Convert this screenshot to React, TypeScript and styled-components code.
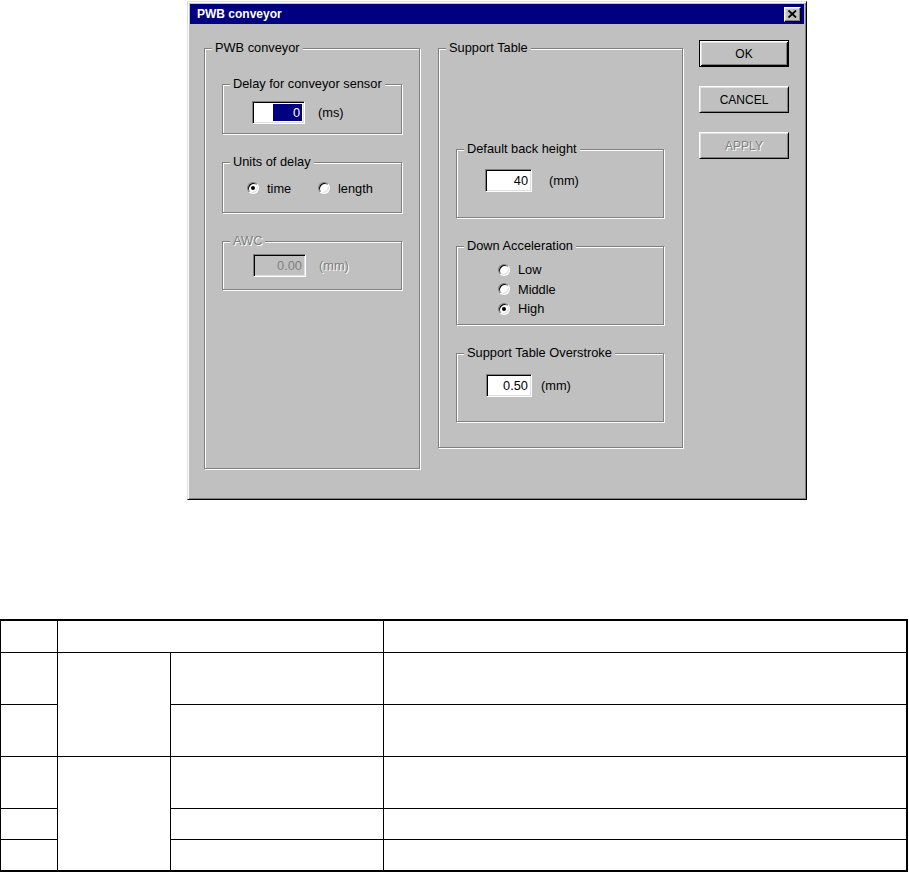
import styled, { createGlobalStyle } from 'styled-components';

const GlobalStyle = createGlobalStyle`
  body {
    margin: 0;
    background: #fff;
    font-family: 'Liberation Sans', Arial, sans-serif;
    color: #000;
  }
`;

const Page = styled.div`
  display: flex;
  flex-direction: column;
  align-items: flex-start;
`;

const Window = styled.div`
  box-sizing: border-box;
  width: 620px;
  height: 499px;
  margin: 1px 0 0 187px;
  padding: 2px;
  background: #c0c0c0;
  border: 1px solid;
  border-color: #dfdfdf #000 #000 #dfdfdf;
  box-shadow: inset 1px 1px #fff, inset -1px -1px #808080;
  display: flex;
  flex-direction: column;
`;

const TitleBar = styled.div`
  height: 20px;
  background: #000080;
  display: flex;
  align-items: center;
  justify-content: space-between;
  padding: 0 3px 0 7px;
`;

const Title = styled.span`
  color: #fff;
  font-weight: bold;
  font-size: 12px;
`;

const CloseButton = styled.div`
  box-sizing: border-box;
  width: 17px;
  height: 15px;
  background: #c0c0c0;
  border: 1px solid;
  border-color: #fff #000 #000 #fff;
  box-shadow: inset -1px -1px #808080, inset 1px 1px #dfdfdf;
  display: flex;
  align-items: center;
  justify-content: center;
`;

const Body = styled.div`
  display: flex;
  align-items: flex-start;
  padding: 16px 0 0 14px;
`;

const Group = styled.fieldset<{ $w?: number; $h: number }>`
  box-sizing: border-box;
  width: ${p => (p.$w ? `${p.$w}px` : 'auto')};
  height: ${p => p.$h}px;
  margin: 0;
  padding: 0;
  min-width: 0;
  border: 1px solid #808080;
  box-shadow: inset 1px 1px #fff, 1px 1px #fff;
`;

const Legend = styled.legend<{ $disabled?: boolean }>`
  margin-left: 7px;
  padding: 0 3px;
  font-size: 12.8px;
  line-height: 14px;
  background: #c0c0c0;
  color: ${p => (p.$disabled ? '#808080' : '#000')};
  text-shadow: ${p => (p.$disabled ? '1px 1px #fff' : 'none')};
`;

const GroupContent = styled.div<{ $pad: string; $gap?: number }>`
  display: flex;
  flex-direction: column;
  gap: ${p => p.$gap ?? 0}px;
  padding: ${p => p.$pad};
`;

const OuterLeft = styled.div`
  margin-top: 1px;
`;

const OuterRight = styled.div`
  margin: 1px 0 0 18px;
`;

const FieldRow = styled.div<{ $gap: number }>`
  display: flex;
  align-items: center;
  gap: ${p => p.$gap}px;
`;

const TextBox = styled.div<{ $w: number; $disabled?: boolean }>`
  box-sizing: border-box;
  width: ${p => p.$w}px;
  height: 23px;
  border: 1px solid;
  border-color: #808080 #fff #fff #808080;
  box-shadow: inset 1px 1px #000, inset -1px -1px #dfdfdf;
  background: ${p => (p.$disabled ? '#c0c0c0' : '#fff')};
  color: ${p => (p.$disabled ? '#808080' : '#000')};
  display: flex;
  align-items: center;
  justify-content: flex-end;
  padding: 2px 3px 2px 2px;
  font-size: 12.8px;
`;

const Selection = styled.span`
  align-self: stretch;
  width: 29px;
  margin-right: -1px;
  background: #000080;
  color: #fff;
  display: flex;
  align-items: center;
  justify-content: flex-end;
  padding-right: 2px;
  box-sizing: border-box;
`;

const Unit = styled.span<{ $disabled?: boolean }>`
  font-size: 12.8px;
  color: ${p => (p.$disabled ? '#808080' : '#000')};
  text-shadow: ${p => (p.$disabled ? '1px 1px #fff' : 'none')};
`;

const RadioRow = styled.div`
  display: flex;
  align-items: center;
  height: 16px;
`;

const RadioOption = styled.div<{ $w?: number }>`
  display: flex;
  align-items: center;
  gap: 8px;
  height: 19.5px;
  width: ${p => (p.$w ? `${p.$w}px` : 'auto')};
  font-size: 12.8px;
`;

const RadioCircle = styled.span<{ $checked?: boolean }>`
  box-sizing: border-box;
  flex-shrink: 0;
  width: 12px;
  height: 12px;
  border-radius: 50%;
  border: 1px solid;
  border-color: #808080 #fff #fff #808080;
  box-shadow: inset 1px 1px #000, inset -1px -1px #dfdfdf;
  background: #fff;
  display: flex;
  align-items: center;
  justify-content: center;

  &::after {
    content: '';
    width: 4px;
    height: 4px;
    border-radius: 50%;
    background: ${p => (p.$checked ? '#000' : 'transparent')};
  }
`;

const ButtonColumn = styled.div`
  display: flex;
  flex-direction: column;
  gap: 19px;
  margin-left: 16px;
`;

const Button = styled.div<{ $default?: boolean; $disabled?: boolean }>`
  box-sizing: border-box;
  width: 90px;
  height: 27px;
  display: flex;
  align-items: center;
  justify-content: center;
  font-size: 12px;
  background: #c0c0c0;
  color: ${p => (p.$disabled ? '#808080' : '#000')};
  text-shadow: ${p => (p.$disabled ? '1px 1px #fff' : 'none')};
  border: 1px solid;
  border-color: ${p => (p.$default ? '#000' : '#fff #000 #000 #fff')};
  box-shadow: ${p =>
    p.$default
      ? 'inset 1px 1px #fff, inset -1px -1px #000, inset 2px 2px #dfdfdf, inset -2px -2px #808080'
      : 'inset 1px 1px #dfdfdf, inset -1px -1px #808080'};
`;

const Table = styled.table`
  margin-top: 119px;
  width: 908px;
  table-layout: fixed;
  border-collapse: separate;
  border-spacing: 0;
  border-style: solid;
  border-color: #000;
  border-width: 2px 2px 2px 1px;
`;

const Row = styled.tr<{ $h: number }>`
  height: ${p => p.$h}px;
`;

const Cell = styled.td<{ $lastCol?: boolean; $lastRow?: boolean }>`
  padding: 0;
  border-right: ${p => (p.$lastCol ? 'none' : '1px solid #000')};
  border-bottom: ${p => (p.$lastRow ? 'none' : '1px solid #000')};
`;

const CloseIcon = () => (
  <svg width="9" height="8" viewBox="0 0 9 8">
    <path d="M0.5 0.5 L8 7.5 M8 0.5 L0.5 7.5" stroke="#000" strokeWidth="1.8" />
  </svg>
);

export default function App() {
  return (
    <Page>
      <GlobalStyle />
      <Window>
        <TitleBar>
          <Title>PWB conveyor</Title>
          <CloseButton>
            <CloseIcon />
          </CloseButton>
        </TitleBar>
        <Body>
          <OuterLeft>
            <Group $w={216} $h={428}>
              <Legend>PWB conveyor</Legend>
              <GroupContent $pad="22px 17px 0" $gap={21}>
                <Group $h={57}>
                  <Legend>Delay for conveyor sensor</Legend>
                  <GroupContent $pad="10px 0 0 29px">
                    <FieldRow $gap={13}>
                      <TextBox $w={53}>
                        <Selection>0</Selection>
                      </TextBox>
                      <Unit>(ms)</Unit>
                    </FieldRow>
                  </GroupContent>
                </Group>
                <Group $h={58}>
                  <Legend>Units of delay</Legend>
                  <GroupContent $pad="11px 0 0 24px">
                    <RadioRow>
                      <RadioOption $w={71}>
                        <RadioCircle $checked />
                        time
                      </RadioOption>
                      <RadioOption>
                        <RadioCircle />
                        length
                      </RadioOption>
                    </RadioRow>
                  </GroupContent>
                </Group>
                <Group $h={56}>
                  <Legend $disabled>AWC</Legend>
                  <GroupContent $pad="6px 0 0 30px">
                    <FieldRow $gap={13}>
                      <TextBox $w={53} $disabled>
                        0.00
                      </TextBox>
                      <Unit $disabled>(mm)</Unit>
                    </FieldRow>
                  </GroupContent>
                </Group>
              </GroupContent>
            </Group>
          </OuterLeft>
          <OuterRight>
            <Group $w={245} $h={407}>
              <Legend>Support Table</Legend>
              <GroupContent $pad="87px 18px 0 17px" $gap={21}>
                <Group $h={76}>
                  <Legend>Default back height</Legend>
                  <GroupContent $pad="13px 0 0 28px">
                    <FieldRow $gap={17}>
                      <TextBox $w={47}>40</TextBox>
                      <Unit>(mm)</Unit>
                    </FieldRow>
                  </GroupContent>
                </Group>
                <Group $h={86}>
                  <Legend>Down Acceleration</Legend>
                  <GroupContent $pad="7px 0 0 41px">
                    <RadioOption>
                      <RadioCircle />
                      Low
                    </RadioOption>
                    <RadioOption>
                      <RadioCircle />
                      Middle
                    </RadioOption>
                    <RadioOption>
                      <RadioCircle $checked />
                      High
                    </RadioOption>
                  </GroupContent>
                </Group>
                <Group $h={76}>
                  <Legend>Support Table Overstroke</Legend>
                  <GroupContent $pad="14px 0 0 29px">
                    <FieldRow $gap={9}>
                      <TextBox $w={46}>0.50</TextBox>
                      <Unit>(mm)</Unit>
                    </FieldRow>
                  </GroupContent>
                </Group>
              </GroupContent>
            </Group>
          </OuterRight>
          <ButtonColumn>
            <Button $default>OK</Button>
            <Button>CANCEL</Button>
            <Button $disabled>APPLY</Button>
          </ButtonColumn>
        </Body>
      </Window>
      <Table>
        <colgroup>
          <col style={{ width: 57 }} />
          <col style={{ width: 113 }} />
          <col style={{ width: 213 }} />
          <col style={{ width: 522 }} />
        </colgroup>
        <tbody>
          <Row $h={32}>
            <Cell />
            <Cell colSpan={2} />
            <Cell $lastCol />
          </Row>
          <Row $h={52}>
            <Cell />
            <Cell rowSpan={2} />
            <Cell />
            <Cell $lastCol />
          </Row>
          <Row $h={52}>
            <Cell />
            <Cell />
            <Cell $lastCol />
          </Row>
          <Row $h={52}>
            <Cell />
            <Cell rowSpan={3} $lastRow />
            <Cell />
            <Cell $lastCol />
          </Row>
          <Row $h={31}>
            <Cell />
            <Cell />
            <Cell $lastCol />
          </Row>
          <Row $h={30}>
            <Cell $lastRow />
            <Cell $lastRow />
            <Cell $lastCol $lastRow />
          </Row>
        </tbody>
      </Table>
    </Page>
  );
}
